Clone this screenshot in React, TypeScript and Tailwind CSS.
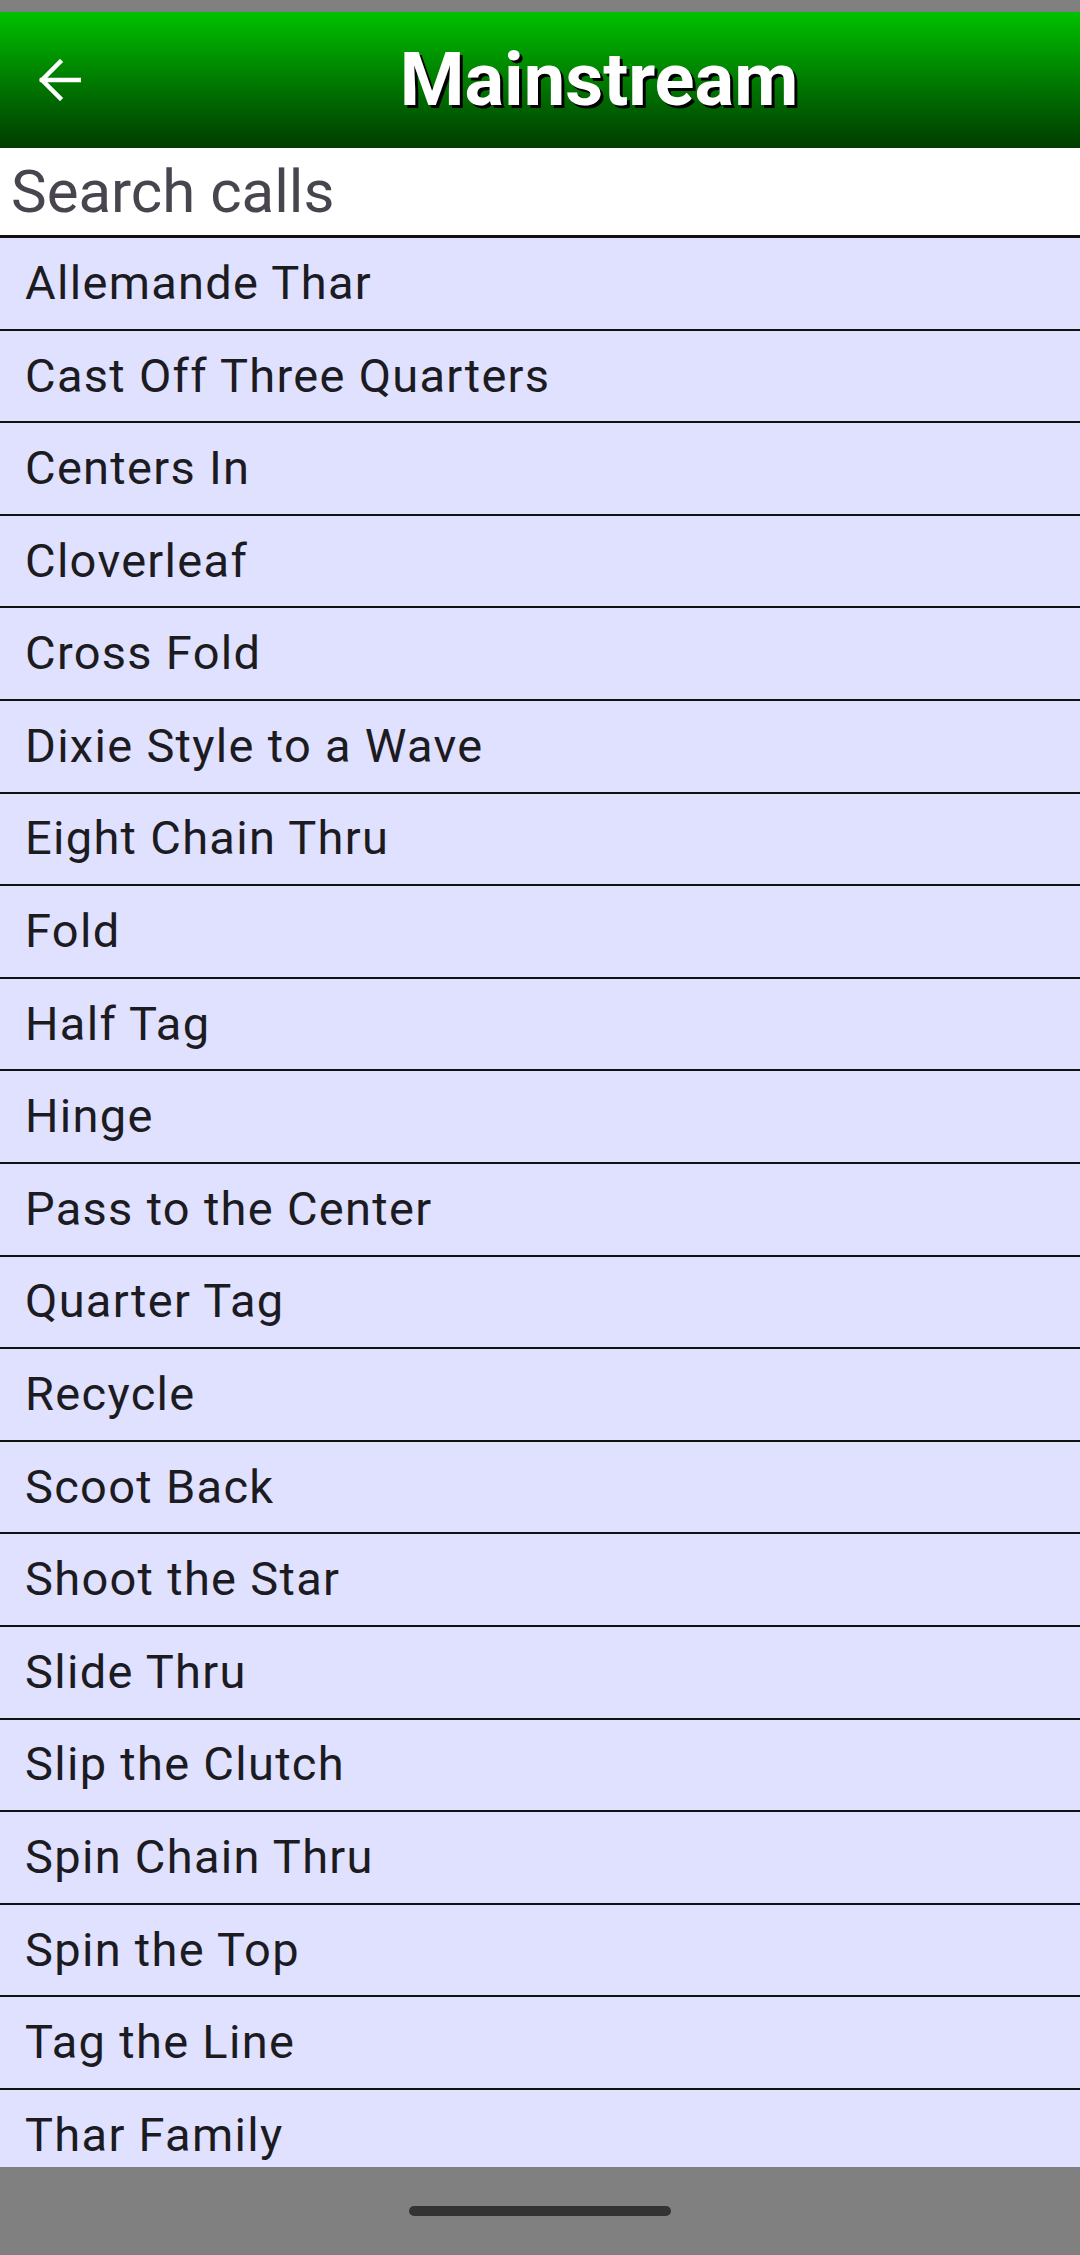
const calls = [
  'Allemande Thar',
  'Cast Off Three Quarters',
  'Centers In',
  'Cloverleaf',
  'Cross Fold',
  'Dixie Style to a Wave',
  'Eight Chain Thru',
  'Fold',
  'Half Tag',
  'Hinge',
  'Pass to the Center',
  'Quarter Tag',
  'Recycle',
  'Scoot Back',
  'Shoot the Star',
  'Slide Thru',
  'Slip the Clutch',
  'Spin Chain Thru',
  'Spin the Top',
  'Tag the Line',
  'Thar Family',
];

export default function App() {
  return (
    <div
      className="w-[1080px] h-[2255px] flex flex-col overflow-hidden bg-white"
      style={{ fontFamily: 'Roboto, "Noto Sans", sans-serif' }}
    >
      {/* Status bar */}
      <div className="h-[12px] bg-[#808080] shrink-0" />

      {/* App bar */}
      <div className="h-[136px] shrink-0 flex items-center bg-gradient-to-b from-[#00c200] to-[#003d00]">
        <button type="button" className="w-[147px] h-full flex items-center pl-[37px]">
          <svg width="44" height="42" viewBox="0 0 44 42" fill="none">
            <path
              d="M42 21H5M23 3L5 21l18 18"
              stroke="white"
              strokeWidth="4.5"
              strokeLinecap="square"
            />
          </svg>
        </button>
        <div className="flex-1 text-center pr-[29px]">
          <span className="text-[74px] font-bold text-white leading-none [text-shadow:3px_3px_0_#000]">
            Mainstream
          </span>
        </div>
      </div>

      {/* Search field */}
      <div className="h-[90px] shrink-0 border-b-[3px] border-[#111] flex items-center pl-[11px]">
        <span className="text-[60px] text-[#49454f] leading-none">Search calls</span>
      </div>

      {/* Calls list */}
      <div className="flex-1 overflow-hidden bg-[#e0e0ff]">
        {calls.map((call) => (
          <div
            key={call}
            className="h-[92.6px] border-b-2 border-[#111] flex items-center pl-[25px]"
          >
            <span className="text-[47px] text-[#1c1b1f] tracking-[1.3px] leading-tight">{call}</span>
          </div>
        ))}
      </div>

      {/* Navigation bar */}
      <div className="h-[88px] shrink-0 bg-[#808080] flex items-center justify-center">
        <div className="w-[262px] h-[10px] rounded-full bg-[#333333]" />
      </div>
    </div>
  );
}
